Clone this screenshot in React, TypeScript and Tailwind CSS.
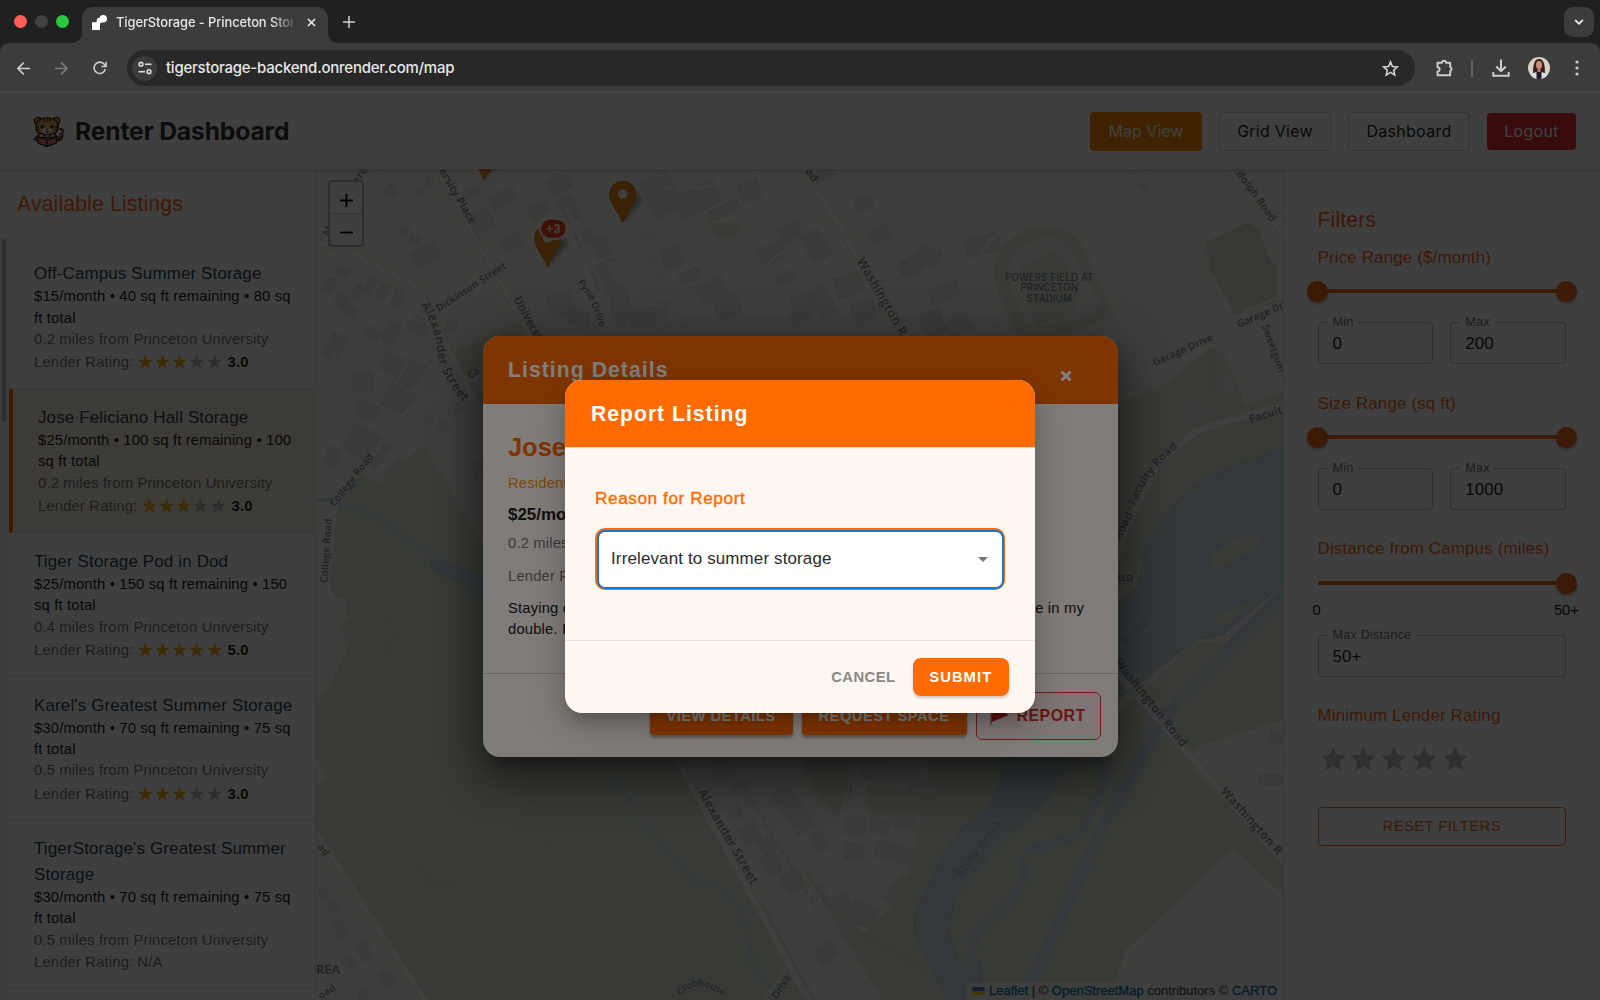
import React from "react";

const HELV = "font-['Liberation_Sans',Arial,sans-serif]";
const ROUND_STAR = "M12 17.27 18.18 21l-1.64-7.03L22 9.24l-7.19-.61L12 2 9.19 8.63 2 9.24l5.46 4.73L5.82 21z";
const SHARP_STAR = "M12 1l2.600 8.100H23l-6.800 5 2.600 8L12 17.200 5.200 22.100l2.600-8L1 9.100h8.400z";

type Listing = { title: string; detail: string; miles: string; rating: number | null; active?: boolean };

const listings: Listing[] = [
  { title: "Off-Campus Summer Storage", detail: "$15/month • 40 sq ft remaining • 80 sq ft total", miles: "0.2", rating: 3 },
  { title: "Jose Feliciano Hall Storage", detail: "$25/month • 100 sq ft remaining • 100 sq ft total", miles: "0.2", rating: 3, active: true },
  { title: "Tiger Storage Pod in Dod", detail: "$25/month • 150 sq ft remaining • 150 sq ft total", miles: "0.4", rating: 5 },
  { title: "Karel's Greatest Summer Storage", detail: "$30/month • 70 sq ft remaining • 75 sq ft total", miles: "0.5", rating: 3 },
  { title: "TigerStorage's Greatest Summer Storage", detail: "$30/month • 70 sq ft remaining • 75 sq ft total", miles: "0.5", rating: null },
];

function TabStrip() {
  return (
    <div className="flex h-[43px] shrink-0 items-start bg-[#1f2120]">
      <div className="flex h-[43px] w-[82px] items-center gap-2 pl-[13.5px]">
        <span className="size-[13px] rounded-full bg-[#ff5f57]" />
        <span className="size-[13px] rounded-full bg-[#404241]" />
        <span className="size-[13px] rounded-full bg-[#28c840]" />
      </div>
      <div className="relative mt-[7px] flex h-9 w-[246px] items-center rounded-t-[11px] bg-[#3c3c3c] px-[10px] pb-[5px]">
        <svg className="absolute bottom-0 -left-[10px] size-[10px]" viewBox="0 0 10 10"><path d="M10 0V10H0A10 10 0 0 0 10 0z" fill="#3c3c3c" /></svg>
        <svg className="absolute -right-[10px] bottom-0 size-[10px]" viewBox="0 0 10 10"><path d="M0 0V10H10A10 10 0 0 1 0 0z" fill="#3c3c3c" /></svg>
        <svg className="size-[15px] shrink-0" viewBox="0 0 15 15" fill="#fff">
          <circle cx="11.200" cy="3.800" r="3.800" /><path d="M0 7.200H4.700V5.500Q4.700 2.800 7.500 2.800H11V6.500Q11 7.600 9.500 7.600Q8 7.600 8 9.500V15H0z" />
        </svg>
        <div className="ml-[9px] w-[177px] overflow-hidden font-[Inter,sans-serif] text-[12.900px] font-medium tracking-[-0.080px] whitespace-nowrap text-[#e6e6e6] [mask-image:linear-gradient(90deg,#000_155px,transparent_182px)]">
          TigerStorage - Princeton Storage
        </div>
        <svg className="ml-[14px] size-[9px] shrink-0" viewBox="0 0 9 9"><path d="M1 1l7 7M8 1L1 8" stroke="#e3e3e3" strokeWidth="1.7" /></svg>
      </div>
      <svg className="mt-[15.500px] ml-[15px] size-[12px]" viewBox="0 0 12 12"><path d="M6 0v12M0 6h12" stroke="#d0d0d0" strokeWidth="1.5" /></svg>
      <div className="mt-[7px] mr-[6px] ml-auto flex size-[30px] items-center justify-center rounded-[9px] bg-[#3c3c3c]">
        <svg className="size-[10px]" viewBox="0 0 10 10"><path d="M1.200 3l3.800 3.800L8.800 3" fill="none" stroke="#e8e8e8" strokeWidth="1.8" /></svg>
      </div>
    </div>
  );
}

function Toolbar() {
  return (
    <div className="bg-[#1f2120]">
      <div className="flex h-[49px] items-center rounded-t-[9px] border-b border-[#4a4a4a] bg-[#3c3c3c] pt-[2px] pl-[17px]">
        <svg className="size-[13px]" viewBox="0 0 13 13"><path d="M13 6.500H1M6.800.7L1 6.500l5.800 5.800" fill="none" stroke="#cdcdcd" strokeWidth="1.700" /></svg>
        <svg className="ml-[25px] size-[13px]" viewBox="0 0 13 13"><path d="M0 6.500h12M6.200.7L12 6.500l-5.800 5.800" fill="none" stroke="#7c7c7c" strokeWidth="1.700" /></svg>
        <svg className="ml-[25px] size-[14px]" viewBox="0 0 14 14">
          <path d="M12.300 8.300A5.700 5.700 0 1 1 11.300 3.300L12.600 4.900" fill="none" stroke="#cdcdcd" strokeWidth="1.600" />
          <path d="M13.100.8V5.500H8.300" fill="none" stroke="#cdcdcd" strokeWidth="1.600" />
        </svg>
        <div className="ml-[20px] flex h-9 w-[1288px] items-center rounded-full bg-[#282828] pr-[16px] pl-[5px]">
          <div className="flex size-[25px] items-center justify-center rounded-full bg-[#3b3b3b]">
            <svg className="size-[14px]" viewBox="0 0 14 14" fill="none" stroke="#dcdcdc" strokeWidth="1.600">
              <circle cx="3" cy="3.300" r="1.900" /><path d="M7 3.300h6.500" /><circle cx="11" cy="10.700" r="1.900" /><path d="M.5 10.700H7" />
            </svg>
          </div>
          <span className="ml-[9px] font-[Inter,sans-serif] text-[15px] font-medium tracking-[-0.240px] text-[#e6e6e6]">tigerstorage-backend.onrender.com/map</span>
          <svg className="ml-auto size-[17px]" viewBox="0 0 16 16"><path d="M8 1.800l1.800 4.300 4.700.4-3.500 3.100 1 4.600-4-2.500-4 2.500 1-4.600-3.500-3.100 4.700-.4z" fill="none" stroke="#d2d2d2" strokeWidth="1.500" /></svg>
        </div>
        <svg className="ml-[20px] size-[19px]" viewBox="0 0 19 19">
          <path d="M2.500 3.700H7A2 2 0 0 1 11 3.700H15.200V8.200A2 2 0 0 1 15.200 12V16.200H2.500V12.500A2.100 2.100 0 0 0 2.500 8.200z" fill="none" stroke="#cdcdcd" strokeWidth="1.900" strokeLinejoin="round" />
        </svg>
        <span className="ml-[17px] h-[17px] w-[1.500px] bg-[#626262]" />
        <svg className="ml-[19px] size-[18px]" viewBox="0 0 18 18"><path d="M9 .5V12M4.200 7.500L9 12.200l4.800-4.700M1.300 13v3.700h15.400V13" fill="none" stroke="#cdcdcd" strokeWidth="2" /></svg>
        <svg className="ml-[18.500px] size-[22px] rounded-full" viewBox="0 0 22 22">
          <rect width="22" height="22" fill="#d9cfc6" />
          <path d="M5 18C5 8 6 2 11 2s6 6 6 16z" fill="#33201b" />
          <ellipse cx="11" cy="8" rx="3" ry="4" fill="#c98f78" />
          <path d="M2 22c0-6 4-7 9-7s9 1 9 7z" fill="#d7d9ea" />
          <path d="M8.500 15h5v7h-5z" fill="#1d1a20" />
          <path d="M9.500 11h3v4h-3z" fill="#b97c67" />
        </svg>
        <svg className="ml-[24.500px] h-[16px] w-[4px]" viewBox="0 0 4 16" fill="#cdcdcd"><circle cx="2" cy="2" r="1.600" /><circle cx="2" cy="8" r="1.600" /><circle cx="2" cy="14" r="1.600" /></svg>
      </div>
    </div>
  );
}

function TigerLogo() {
  return (
    <svg className="mt-px size-[31px]" viewBox="0 0 32 32">
      <g stroke="#2b2320" strokeWidth="1.300" strokeLinejoin="round">
        <path d="M24 24c4 1 6.500-2 5-6.500M30 16.500c.8-1.800-.6-2.600-1.600-1.600" fill="none" stroke="#2b2320" strokeWidth="4" />
        <path d="M24 24c4 1 6.500-2 5-6.500M30 16.500c.8-1.800-.6-2.600-1.600-1.600" fill="none" stroke="#d88428" strokeWidth="2.200" strokeDasharray="2.500 1.200" />
        <circle cx="5" cy="5" r="3.600" fill="#efa04b" /><circle cx="24" cy="5" r="3.600" fill="#efa04b" />
        <path d="M5 20l-4 4 5 2.500zM24 20l4 4-5 2.500z" fill="#d39a6a" />
        <path d="M14.500 2C22 2 26 6 26 11.500S21 19.500 14.500 19.500 3 17 3 11.500 7 2 14.500 2z" fill="#f2a757" />
        <path d="M5 22h19v6l-9.500 3.500L5 28z" fill="#d28b62" />
        <path d="M5 22l9.500 2.500L24 22M14.500 24.500v7" fill="none" />
        <path d="M5.500 20c2-3 6-2 6 .5s-5 2.500-6-.5zM23.500 20c-2-3-6-2-6 .5s5 2.500 6-.5z" fill="#f3d3a8" />
      </g>
      <ellipse cx="14.500" cy="15" rx="5" ry="3.300" fill="#fbe9d2" />
      <path d="M14.500 2v4M11 2.500l.8 3M18 2.500l-.8 3M3.500 11l3 .6M3.800 14l3-.2M25.500 11l-3 .6M25.300 14l-3-.2M13 16l1.500 1 1.500-1" stroke="#2b2320" strokeWidth="1.300" fill="none" />
      <circle cx="9.500" cy="11" r="2" fill="#1d4050" /><circle cx="19.500" cy="11" r="2" fill="#1d4050" /><path d="M13 12.800h3l-1.500 1.800z" fill="#2b2320" />
    </svg>
  );
}

function PageHeader() {
  return (
    <header className="relative z-10 flex h-[77px] shrink-0 items-center bg-white pt-px pr-[24px] pl-[33px] font-[Inter,sans-serif] shadow-[0_2px_5px_rgba(0,0,0,0.16)]">
      <TigerLogo />
      <h1 className="mt-px ml-[11px] text-[24.600px] font-bold tracking-[-0.120px] text-[#333]">Renter Dashboard</h1>
      <nav className="ml-auto flex items-center gap-[17px] text-[16px] text-[#222]">
        <span className="flex h-[39px] w-[112px] items-center justify-center rounded-[4px] bg-[#ff8f00] text-white">Map View</span>
        <span className="flex h-[39px] w-[112px] items-center justify-center rounded-[4px] border border-[#ccc] tracking-[0.250px]">Grid View</span>
        <span className="flex h-[39px] w-[122px] items-center justify-center rounded-[4px] border border-[#ccc] tracking-[0.300px]">Dashboard</span>
        <span className="flex h-[37px] w-[89px] items-center justify-center rounded-[4px] bg-[#e03131] tracking-[0.300px] text-white">Logout</span>
      </nav>
    </header>
  );
}

function Sidebar() {
  return (
    <aside className="flex w-[316px] shrink-0 flex-col overflow-hidden border-r border-[#e4e4e4] bg-white">
      <h2 className="pt-[20.500px] pl-[17px] text-[21.160px] leading-[28px] tracking-[0.16px] text-[#f26a1b]">Available Listings</h2>
      <div className="mt-[21.500px] flex min-h-0 flex-1">
        <div className="w-[9px] shrink-0 bg-[#f4f4f4] pl-[2px]"><div className="h-[183px] w-[4px] rounded-full bg-[#bdbdbd]" /></div>
        <ul className="flex min-w-0 flex-1 flex-col pt-[6px]">
          {listings.map((l) => (
            <li
              key={l.title}
              className={
                l.active
                  ? "shrink-0 border-b border-l-4 border-b-[#d8d8d8] border-l-[#ff6b00] bg-[#faf1e2] pt-[16px] pr-[15px] pb-[13.900px] pl-[25px]"
                  : "shrink-0 border-b border-b-[#dcdcdc] pt-[16px] pr-[20px] pb-[13.900px] pl-[25px]"
              }
            >
              <p className="text-[16.930px] leading-[25.400px] tracking-[0.16px] text-[#2c3e50]">{l.title}</p>
              <p className="text-[14.810px] leading-[21.180px] tracking-[0.16px] text-[#202020]">{l.detail}</p>
              <p className="text-[14.810px] leading-[21.180px] tracking-[0.16px] text-[#757575]">{l.miles} miles from Princeton University</p>
              <div className={l.rating === null ? "flex h-[22px] items-center text-[14.810px] tracking-[0.16px] text-[#757575]" : "flex h-[24px] items-center pt-px text-[14.810px] tracking-[0.16px] text-[#757575]"}>
                Lender Rating:
                {l.rating === null ? (
                  <span className="ml-[4px]">N/A</span>
                ) : (
                  <>
                    <span className="ml-[4px] flex">
                      {[1, 2, 3, 4, 5].map((n) => (
                        <svg key={n} className="mb-[2px] size-[17.050px]" viewBox="0 0 24 23">
                          <path d={SHARP_STAR} className={n <= (l.rating ?? 0) ? "fill-[#eeb01e]" : "fill-[#b5b5b5]"} />
                        </svg>
                      ))}
                    </span>
                    <b className="ml-[5px] text-[#202020]">{l.rating}.0</b>
                  </>
                )}
              </div>
            </li>
          ))}
        </ul>
      </div>
    </aside>
  );
}

function Slider({ range }: { range?: boolean }) {
  return (
    <div className="flex h-[22px] items-center">
      <div className="flex h-1 w-[249px] items-center justify-between bg-[#f26a1b]">
        {range ? <span className="-ml-[10.500px] size-[21px] rounded-full bg-[#f26a1b] shadow-[0_2px_3px_rgba(0,0,0,0.3)]" /> : <span />}
        <span className="-mr-[10.500px] size-[21px] rounded-full bg-[#f26a1b] shadow-[0_2px_3px_rgba(0,0,0,0.3)]" />
      </div>
    </div>
  );
}

function Field({ label, value }: { label: string; value: string }) {
  return (
    <fieldset className="h-[49px] flex-1 rounded-[4px] border border-[#bdbdbd] px-[9px] pb-0">
      <legend className="ml-0 px-[5px] text-[12.700px] leading-[15px] tracking-[0.16px] text-[#757575]">{label}</legend>
      <div className="px-[5px] pt-[4px] text-[16.930px] leading-[20px] tracking-[0.1px] text-[#202020]">{value}</div>
    </fieldset>
  );
}

function FilterPanel() {
  const label = "text-[16.930px] leading-[24px] tracking-[0.16px] text-[#f26a1b]";
  return (
    <aside className="flex w-[317px] shrink-0 flex-col border-l border-[#ddd] bg-white pt-[37px] pr-[34px] pl-[33.500px]">
      <h2 className="text-[21.160px] leading-[28px] tracking-[0.16px] text-[#f26a1b]">Filters</h2>
      <div className="mt-[12px] h-[145.500px]">
        <div className={label}>Price Range ($/month)</div>
        <div className="mt-[10px]"><Slider range /></div>
        <div className="mt-[13px] flex gap-[17px]"><Field label="Min" value="0" /><Field label="Max" value="200" /></div>
      </div>
      <div className="h-[145.500px]">
        <div className={label}>Size Range (sq ft)</div>
        <div className="mt-[10.500px]"><Slider range /></div>
        <div className="mt-[12.500px] flex gap-[17px]"><Field label="Min" value="0" /><Field label="Max" value="1000" /></div>
      </div>
      <div className="h-[167px]">
        <div className={label}>Distance from Campus (miles)</div>
        <div className="mt-[11px]"><Slider /></div>
        <div className="mt-[6px] -mr-[13px] -ml-[5px] flex justify-between text-[14.810px] leading-[20px] text-[#202020]"><span>0</span><span>50+</span></div>
        <div className="mt-[8px] flex"><Field label="Max Distance" value="50+" /></div>
      </div>
      <div className={label}>Minimum Lender Rating</div>
      <div className="mt-[16px] flex">
        {[1, 2, 3, 4, 5].map((n) => (
          <svg key={n} className="size-[30.500px]" viewBox="0 0 24 24"><path d={ROUND_STAR} fill="#bdbdbd" /></svg>
        ))}
      </div>
      <div className="mt-[32px] flex h-[39px] items-center justify-center rounded-[4px] border border-[#f26a1b] text-[14.810px] tracking-[0.420px] text-[#f26a1b]">RESET FILTERS</div>
    </aside>
  );
}

// [x, y, width, height, rotation] in map units (three units per pixel).
const buildings: number[][] = [
  [290, 235, 80, 50, -30], [60, 380, 34, 40, 30], [115, 350, 20, 45, 25], [150, 330, 25, 50, 25], [190, 340, 25, 50, 25], [230, 365, 25, 55, 25],
  [60, 300, 40, 25, 30], [25, 330, 30, 40, 20], [280, 450, 60, 50, 30], [205, 460, 40, 70, 25], [145, 480, 45, 32, 30], [75, 410, 45, 30, 30], [35, 500, 45, 75, 25],
  [200, 560, 60, 60, 30], [110, 610, 60, 60, 5], [265, 580, 45, 80, 30], [205, 660, 85, 70, 25], [120, 705, 70, 45, 25], [90, 790, 125, 85, 35], [30, 840, 40, 50, 20], [205, 885, 65, 40, -45],
  [325, 745, 28, 24, -20], [365, 760, 30, 30, 45], [410, 695, 26, 40, -20], [470, 880, 40, 50, -20], [390, 455, 30, 40, 20],
  [210, 50, 32, 32, 30], [330, 30, 22, 22, 20], [300, 60, 22, 22, 20], [250, 170, 26, 30, 20], [280, 200, 30, 30, 20],
  [440, 60, 50, 26, -30], [520, 70, 80, 40, -30], [470, 130, 60, 60, -25], [560, 200, 55, 40, -25], [700, 20, 60, 50, -30], [740, 90, 45, 70, -30], [640, 110, 55, 35, -30],
  [780, 190, 50, 45, -25], [840, 210, 42, 75, -20], [880, 350, 60, 110, -20], [830, 290, 50, 65, -20], [940, 420, 120, 40, -20], [700, 380, 70, 60, -20], [760, 430, 60, 40, 10],
  [990, 20, 90, 120, -25], [1080, 60, 130, 70, -25], [1180, 110, 90, 30, -25], [1270, 40, 60, 55, -20], [1330, 230, 75, 55, -25], [1390, 170, 60, 45, -25],
  [1040, 240, 55, 60, -20], [1150, 340, 80, 55, -25], [1200, 390, 70, 55, -25], [1090, 310, 60, 30, -25], [1380, 315, 55, 30, -25], [1430, 380, 50, 60, -20], [1420, 425, 70, 30, -30],
  [1490, 360, 60, 90, -30], [1560, 320, 80, 60, -20], [1610, 400, 70, 60, -20], [1470, 190, 60, 90, -30], [1500, 5, 60, 30, -20], [1618, 85, 50, 40, -20], [1660, 180, 60, 40, -30],
  [1750, 270, 70, 50, -30], [1800, 240, 70, 50, 20], [1840, 350, 90, 45, -20], [1820, 430, 60, 70, -20], [1890, 450, 70, 50, -30], [1950, 205, 100, 52, -15], [2590, 690, 110, 70, -15], [2470, 48, 20, 14, 0],
  [60, 2260, 26, 50, -30], [130, 2320, 30, 60, -30], [190, 2420, 45, 28, 30], [90, 2370, 25, 25, 20], [10, 2160, 26, 30, 10], [130, 2460, 24, 32, 20], [40, 2200, 24, 34, -30],
  [1190, 1800, 55, 40, 30], [1250, 1830, 50, 40, 30], [1240, 1910, 32, 40, -25], [1270, 1970, 60, 55, -30], [1340, 2060, 50, 60, -30], [1400, 2110, 60, 60, -30], [1330, 2010, 45, 45, -30],
  [1400, 1850, 60, 150, -35], [1640, 1800, 150, 40, 5], [1780, 1840, 80, 40, 20], [1585, 1950, 65, 50, 5], [1660, 1950, 60, 45, 10], [1730, 1945, 70, 40, 5], [1585, 2025, 55, 45, 0], [1680, 2030, 110, 50, 15],
  [1550, 2180, 60, 110, -25], [1600, 2210, 80, 60, 25], [1490, 1990, 40, 60, -25], [1700, 2150, 90, 40, -50], [1500, 2330, 60, 50, -30], [2830, 1820, 70, 30, 0], [2860, 1690, 40, 36, 20],
];

type RoadLabel = { t: string; x: number; y: number; r: number; s: number; ls?: number };
const labels: RoadLabel[] = [
  { t: "ersity Place", x: 368, y: 8, r: 60, s: 33 },
  { t: "Dickinson Street", x: 368, y: 432, r: -33, s: 30 },
  { t: "Universi", x: 593, y: 392, r: 62, s: 34 },
  { t: "Pyne", x: 785, y: 342, r: 56, s: 29 },
  { t: "Drive", x: 826, y: 406, r: 70, s: 29 },
  { t: "College Road", x: 55, y: 1018, r: -52, s: 30 },
  { t: "College Road", x: 34, y: 1245, r: -86, s: 30 },
  { t: "Co", x: 462, y: 634, r: -32, s: 30 },
  { t: "tre", x: 132, y: 46, r: -62, s: 33 },
  { t: "M", x: 40, y: 205, r: -70, s: 31 },
  { t: "ad", x: 1466, y: 12, r: 52, s: 34 },
  { t: "Washington R", x: 1622, y: 278, r: 60, s: 37, ls: 1.5 },
  { t: "dolph Road", x: 2760, y: 18, r: 54, s: 32 },
  { t: "Garage Drive", x: 2516, y: 594, r: -24, s: 30 },
  { t: "Garage Dri", x: 2768, y: 480, r: -24, s: 30 },
  { t: "Sweetgum", x: 2838, y: 474, r: 70, s: 29 },
  { t: "Facult", x: 2804, y: 766, r: -18, s: 34 },
  { t: "Road", x: 2412, y: 1115, r: -62, s: 34 },
  { t: "Alexander Street", x: 1145, y: 1872, r: 60, s: 37, ls: 1.5 },
  { t: "Washington Road", x: 2394, y: 1484, r: 51.5, s: 36, ls: 1.5 },
  { t: "Washington R", x: 2712, y: 1872, r: 48, s: 36, ls: 1.5 },
  { t: "Drive", x: 1384, y: 2494, r: -58, s: 30 },
  { t: "oad", x: 14, y: 2494, r: -32, s: 30 },
  { t: "ad", x: 4, y: 2036, r: 55, s: 30 },
];

function Pin({ x, y, hole = true }: { x: number; y: number; hole?: boolean }) {
  return (
    <g transform={`translate(${x} ${y})`}>
      <path d="M0 0L60 -66A30 26 0 0 0 10 -80z" fill="#000" opacity="0.3" filter="url(#soft)" />
      <path d="M0 0C-12 -32 -39 -56 -39 -86A39 38 0 0 1 39 -86C39 -56 12 -32 0 0z" fill="#ee8a14" stroke="#c9761a" strokeWidth="3" />
      {hole && <circle cx="0" cy="-86" r="14" fill="#fff" />}
    </g>
  );
}

function CampusMap() {
  return (
    <svg className="block h-full w-full" viewBox="0 3 2901 2493" preserveAspectRatio="xMinYMin slice">
      <defs>
        <filter id="soft" x="-50%" y="-50%" width="200%" height="200%"><feGaussianBlur stdDeviation="6" /></filter>
        <path id="alex" d="M314 412Q358 470 364 560Q372 625 472 740" />
        <path id="faculty" d="M2456 1014Q2500 900 2600 828" />
        <path id="club" d="M1095 2484Q1140 2420 1235 2494" />
        <path id="stony" d="M1935 2126L2085 1932" />
      </defs>
      <rect width="2901" height="2500" fill="#fbf8f3" />
      <g fill="#e1ead6">
        <path d="M325 830L500 1130 1075 1766 1300 2186 1340 2206 1430 2370 1500 2496H330L0 1996V1594L32 1571 97 1436 70 1371 98 1356 85 1291 50 1286 30 1176 50 1130 60 1010 135 918 190 945z" />
        <path d="M0 1766L35 1831 0 1856z" fill="#fbf8f3" />
        <path d="M400 560L600 460 670 500 500 600 470 640z" />
        <path d="M2035 300C2040 190 2240 120 2302 240L2396 445 2240 500 2110 520C2090 440 2030 380 2035 300z" />
        <path d="M2075 300C2085 220 2220 170 2270 250L2355 410 2320 450 2130 480C2120 420 2075 380 2075 300z" fill="#f6f3ec" />
        <path d="M2110 300L2210 250 2240 265 2290 380 2270 430 2160 475z" />
        <path d="M2668 225L2792 165 2830 185 2860 270 2885 300V400L2757 441 2720 370 2685 310z" fill="#d9e6cf" />
        <path d="M2535 655L2690 535 2725 560 2790 710 2901 668V840L2672 930 2540 1055 2480 1180 2472 1260 2400 1300V705z" />
        <path d="M1185 165h88c0 30-20 45-44 45s-44-15-44-45z" />
        <path d="M2405 1640L2640 1420 2750 1425 2901 1300V1655L2640 1740 2630 1806 2780 1960 2901 2076V2180L2752 2040 2430 2346 2380 2496H1880L1800 2000 1860 1766H2400z" />
        <path d="M1452 1766H1600L1610 1880 1560 1940 1500 1880z" />
        <path d="M1650 1850L1850 1880 1810 1940H1660z" />
        <path d="M1840 1766H2090L2010 1940 1890 2050 1790 2240 1900 2496H1700L1460 2100 1640 2300 1760 2180 1810 2000z" />
      </g>
      <path d="M2725 680L2720 560 2780 710z" fill="#fbf8f3" opacity="0.5" />
      <path d="M2405 1260L2472 1260 2460 1200 2480 1200 2472 1210 2400 1330z" fill="#eef0da" />
      <g fill="#cce0e8" stroke="#b6d3de" strokeWidth="3">
        <path d="M2901 838L2672 930 2600 985 2535 1055 2490 1140 2465 1260 2400 1310V1600L2640 1416 2720 1400 2901 1250z" />
        <path d="M2060 1770L2062 1816 2017 1921 1952 1966 1882 2056 1795 2236 1797 2306 1900 2500H2000L1992 2376 1932 2386 1897 2286 1922 2176 2052 2026 2182 1906 2247 1816 2240 1770z" />
        <path d="M345 1180L370 1176 500 1230V1290L350 1200z" />
      </g>
      <path d="M0 995H50L80 1012 130 1020 200 1060 300 1130 350 1170 400 1200" fill="none" stroke="#cce0e8" strokeWidth="9" />
      <path d="M2700 1345L2820 1290 2730 1370 2705 1375z" fill="#e6ecd8" />
      <path d="M2680 1180C2700 1130 2780 1090 2825 1100C2850 1150 2780 1150 2700 1215z" fill="#e6ecd8" />
      <path d="M2345 1766C2400 1850 2320 1920 2295 2000C2200 2040 2150 2020 2125 2080C2130 2180 2060 2220 2000 2280C1960 2320 1960 2380 1970 2496" fill="none" stroke="#cce0e8" strokeWidth="26" />
      <path d="M2910 1270L2560 1626 2360 1976 2120 2500" fill="none" stroke="#cce0e8" strokeWidth="36" />
      <path d="M2880 1265L2535 1600 2326 1976" fill="none" stroke="#efe9dc" strokeWidth="4" strokeDasharray="5 6" />
      <path d="M865 1766L910 1860 950 1900 970 1950 1030 2010 1050 2050 1085 2080 1130 2140 1200 2150 1270 2220 1300 2310 1310 2400 1380 2470" fill="none" stroke="#cce0e8" strokeWidth="8" />
      <g fill="#f0ebe3" stroke="#e2dcd2" strokeWidth="2">
        {buildings.map(([x, y, w, h, r], i) => (
          <rect key={i} x={x} y={y} width={w} height={h} transform={`rotate(${r} ${x + w / 2} ${y + h / 2})`} />
        ))}
      </g>
      <g fill="none" stroke="#d5cec5" strokeWidth="3" strokeDasharray="3 7">
        <path d="M0 580L90 500 240 480 330 600 270 680 210 640 0 700M80 560L100 620 75 690 60 740M240 480L200 560 290 620M330 600L380 540" />
        <path d="M520 10L600 150 680 210 760 300 830 500M560 130L760 90 880 60M640 240L700 500M600 260L760 210M680 130L760 330M760 100L940 420 1040 500M900 240L1180 150 1300 60M960 180L1180 330 1300 240 1450 120M1180 150C1190 240 1280 240 1290 150" />
        <path d="M640 330L760 310M640 400L720 380M680 500L790 480M1000 200L1030 330 1130 360M940 130L1100 480" />
        <path d="M1660 10L1702 130M1452 330L1700 340 1860 200 2000 170 2260 150 2310 60 2490 3M1700 340L1800 320 1900 300 2000 380M1860 200L1880 290 2010 240 1990 160M1900 300L2010 400 2080 500M2310 120L2400 380 2480 560" />
        <path d="M2660 230L2700 370 2740 470M2650 230L2901 130M2680 540L2700 640 2660 760M2530 620L2600 560M200 1330L240 1400 190 1500" />
        <path d="M310 2090L340 2150 430 2150M640 1860L670 1920 690 2040M1130 1900L1000 1960M1570 2050L1500 2200 1600 2060 1800 2000 1850 1850M1452 2130L1560 2100" />
      </g>
      <g fill="none" stroke="#fffdfa" strokeLinejoin="round" strokeWidth="6">
        <path d="M0 280L80 240 120 150 200 20M120 280L220 350M100 230L430 110 560 50M0 660L60 560 100 540M280 440L380 490M560 310L360 440 300 420M450 240L600 460M750 120L880 400 860 500" />
        <path d="M1050 60C1120 70 1140 60 1220 50M1290 40L1330 10M800 300L900 260 960 380 1060 430 1080 500M1340 300L1400 250 1450 300" />
        <path d="M1452 300L1600 260 1560 200M1530 80C1620 60 1640 160 1560 170M1990 320C1980 200 2100 130 2310 150M2000 380L2080 500M2290 90L2380 320 2410 420 2500 590 2560 610M2780 430L2901 385M2520 610L2700 530" strokeWidth="8" />
        <path d="M0 2230L90 2160M1180 1880L1370 1770M1600 1770C1620 1900 1520 1990 1580 2120C1620 2200 1730 2180 1720 2110M1430 2380L1340 2500M2640 1740L2901 1660M2430 2346V2500M2732 2080V2500M2560 2226H2901M2500 2290H2901M2460 2370H2901M2430 2440H2901" strokeWidth="5" />
      </g>
      <g fill="none" strokeLinecap="round" strokeLinejoin="round">
        <g stroke="#efe4cf">
          <path d="M0 225L70 235 290 350 330 405 420 590 500 740 1075 1760 1480 2500" strokeWidth="25" />
          <path d="M360 0L640 500 760 700" strokeWidth="21" />
          <path d="M1452 -20L1610 240 1790 540 2300 1400 2630 1770 2901 2080" strokeWidth="27" />
          <path d="M2901 715L2780 745 2640 790 2530 880 2430 1080 2400 1180" strokeWidth="25" />
          <path d="M0 1996L330 2500" strokeWidth="23" />
          <path d="M2740 3L2901 200" strokeWidth="19" />
        </g>
        <g stroke="#fffefc">
          <path d="M0 225L70 235 290 350 330 405 420 590 500 740 1075 1760 1480 2500" strokeWidth="18" />
          <path d="M360 0L640 500 760 700" strokeWidth="14" />
          <path d="M1452 -20L1610 240 1790 540 2300 1400 2630 1770 2901 2080" strokeWidth="20" />
          <path d="M2901 715L2780 745 2640 790 2530 880 2430 1080 2400 1180" strokeWidth="18" />
          <path d="M0 1996L330 2500" strokeWidth="16" />
          <path d="M2740 3L2901 200" strokeWidth="13" />
          <path d="M500 620L280 720 60 1000 35 1250 60 1320M0 2490L210 2370" strokeWidth="12" />
        </g>
      </g>
      <path d="M1280 1850L1500 2220M1452 2130L1640 2300 1900 2450" stroke="#dcd8d3" strokeWidth="5" strokeDasharray="16 12" fill="none" />
      <g className="font-['Open_Sans','Noto_Sans',sans-serif] font-semibold" fill="#8489a0">
        {labels.map((l, i) => (
          <text key={i} fontSize={l.s} letterSpacing={l.ls ?? 0.5} transform={`translate(${l.x} ${l.y}) rotate(${l.r})`}>{l.t}</text>
        ))}
        <text fontSize="37" letterSpacing="1.500"><textPath href="#alex">Alexander Street</textPath></text>
        <text fontSize="34" letterSpacing="1"><textPath href="#faculty">Faculty Road</textPath></text>
        <text fontSize="28"><textPath href="#club">Clubhouse</textPath></text>
        <text fontSize="39" x="0" y="2418">REA</text>
        <g fontSize="29" textAnchor="middle" className="font-[Inter,sans-serif] font-medium" letterSpacing="0.600">
          <text x="2200" y="339">POWERS FIELD AT</text><text x="2200" y="370">PRINCETON</text><text x="2200" y="402">STADIUM</text>
        </g>
        <text fontSize="27" x="2402" y="1239">ELD</text>
        <g fill="#9db4c0" className="font-normal">
          <text fontSize="32" letterSpacing="2"><textPath href="#stony">Stony Brook</textPath></text>
          <text fontSize="30" letterSpacing="2" transform="translate(2428 1428) rotate(-40)">Brook</text>
        </g>
      </g>
      <Pin x={505} y={36} />
      <Pin x={920} y={164} />
      <Pin x={695} y={296} />
      <rect x="669" y="149" width="86" height="66" rx="33" fill="#fff" />
      <rect x="675" y="155" width="74" height="54" rx="27" fill="#f4470f" />
      <text x="712" y="195" textAnchor="middle" fontSize="38" fill="#fff" className="font-['Liberation_Sans',sans-serif] font-bold">+3</text>
    </svg>
  );
}

function MapArea() {
  return (
    <div className="relative min-w-0 flex-1 overflow-hidden">
      <CampusMap />
      <div className="absolute top-[11px] left-[12px] flex w-[36px] flex-col rounded-[4px] border-2 border-[#bbb8b2] bg-white">
        <span className="flex h-[32px] items-center justify-center border-b border-[#ccc] pt-[5px]"><svg className="size-[13px]" viewBox="0 0 13 13"><path d="M6.500 0v13M0 6.500h13" stroke="#000" strokeWidth="1.800" /></svg></span>
        <span className="flex h-[31px] items-center justify-center pt-[5px]"><svg className="size-[13px]" viewBox="0 0 13 13"><path d="M0 6.500h13" stroke="#000" strokeWidth="1.800" /></svg></span>
      </div>
      <div className="absolute right-0 bottom-0 flex h-[18px] items-center bg-white/80 pr-[6px] pl-[5px] text-[13px] whitespace-pre text-[#333]">
        <svg className="mr-[4px] h-[8px] w-[13px]" viewBox="0 0 12 8"><path fill="#4C7BE1" d="M0 0h12v4H0z" /><path fill="#FFD500" d="M0 4h12v4H0z" /></svg>
        <span className="text-[#0078a8] [-webkit-text-stroke:0.300px_#0078a8]">Leaflet</span> | © <span className="text-[#0078a8] [-webkit-text-stroke:0.300px_#0078a8]">OpenStreetMap</span> contributors © <span className="text-[#0078a8] [-webkit-text-stroke:0.300px_#0078a8]">CARTO</span>
      </div>
    </div>
  );
}

function ListingDialog() {
  return (
    <div className="flex h-[421px] w-[635px] flex-col overflow-hidden rounded-[17px] bg-[#fff8f2] shadow-[0_12px_16px_-7px_rgba(0,0,0,0.3),0_25px_40px_3px_rgba(0,0,0,0.25),0_10px_49px_8px_rgba(0,0,0,0.3)]">
      <div className="flex h-[68px] shrink-0 items-center justify-between bg-[#ff6b00] pt-px pr-[46px] pl-[25.500px] text-white">
        <h2 className="text-[21.160px] font-bold tracking-[1.060px]">Listing Details</h2>
        <svg className="mt-[12px] size-[12px]" viewBox="0 0 12 12"><path d="M1.500 1.500l9 9M10.500 1.500l-9 9" stroke="#fff" strokeWidth="3" /></svg>
      </div>
      <div className="flex-1 border-b border-[#d5cec8] pl-[25.500px] whitespace-nowrap">
        <p className="pt-[26px] text-[25.400px] leading-[34px] font-bold text-[#ff6b00]">Jose Feliciano Hall Storage</p>
        <p className="mt-[8px] text-[14.810px] leading-[22px] tracking-[0.160px] text-[#f9930f]">Residential Hall</p>
        <p className="mt-[9px] text-[16.930px] leading-[24px] font-bold text-[#202020]">$25/month • 100 sq ft</p>
        <p className="mt-[6px] text-[14.810px] leading-[21px] tracking-[0.160px] text-[#757575]">0.2 miles from Princeton University</p>
        <p className="mt-[12px] text-[14.810px] leading-[21px] tracking-[0.160px] text-[#757575]">Lender Rating: 3.0</p>
        <div className="mt-[11px] flex w-[576px] justify-between text-[14.810px] leading-[21.200px] tracking-[0.160px] text-[#202020]"><span>Staying on campus this summer</span><span>space in my</span></div>
        <p className="text-[14.810px] leading-[21.200px] tracking-[0.160px] text-[#202020]">double. It is dry.</p>
      </div>
      <div className="flex h-[83px] shrink-0 items-center justify-end gap-[9px] pt-px pr-[17px] text-[14.810px] font-bold text-white">
        <span className="flex h-[39px] w-[143px] items-center justify-center rounded-[4px] bg-[#ff6b00] pt-px tracking-[0.420px] shadow-[0_3px_3px_rgba(0,0,0,0.3)]">VIEW DETAILS</span>
        <span className="flex h-[39px] w-[165px] items-center justify-center rounded-[4px] bg-[#ff6b00] pt-px tracking-[0.420px] shadow-[0_3px_3px_rgba(0,0,0,0.3)]">REQUEST SPACE</span>
        <span className="flex h-[48px] w-[125px] items-center rounded-[6px] border-[1.500px] border-[#e53935] bg-[#fdeceb] pl-[13px] text-[15.900px] tracking-[0.500px] text-[#d32f2f]">
          <svg className="mr-[8px] h-[21px] w-[19px]" viewBox="0 0 19 21"><path d="M1 1v19" stroke="#777" strokeWidth="1.200" /><path d="M1.500 1L19 10 1.500 17z" fill="#b71c1c" /></svg>
          REPORT
        </span>
      </div>
    </div>
  );
}

function ReportDialog() {
  return (
    <div className="mt-px flex h-[333px] w-[470px] flex-col overflow-hidden rounded-[17px] bg-[#fff7f1] shadow-[0_12px_16px_-7px_rgba(0,0,0,0.2),0_10px_34px_2px_rgba(0,0,0,0.22)]">
      <div className="flex h-[68px] shrink-0 items-center border-b border-[#f3d9c6] bg-[#ff6b00] pt-px pl-[26px] text-[21.160px] font-bold tracking-[1px] text-white">Report Listing</div>
      <div className="flex-1 px-[30px] pt-[38px]">
        <p className="text-[17.200px] leading-[24px] font-medium tracking-[0.580px] text-[#ff6b00] [-webkit-text-stroke:0.400px_#ff6b00]">Reason for Report</p>
        <div className="mt-[18px] flex h-[62px] rounded-[10px] bg-[#ff6b00] p-[1.500px]">
          <div className="flex flex-1 items-center justify-between rounded-[8px] border-2 border-[#1976d2] bg-white pr-[14px] pl-[12.500px] text-[16.930px] tracking-[0.150px] text-[#2b2b2b]">
            Irrelevant to summer storage
            <svg className="h-[5px] w-[10px]" viewBox="0 0 10 5"><path d="M0 0h10L5 5z" fill="#757575" /></svg>
          </div>
        </div>
      </div>
      <div className="flex h-[73.500px] shrink-0 items-center justify-end border-t border-[#ecdfd8] pt-px pr-[26px] text-[14.810px] font-bold">
        <span className="mr-[17px] tracking-[0.450px] text-[#888]">CANCEL</span>
        <span className="flex h-[38px] w-[96.500px] items-center justify-center rounded-[8px] bg-[#ff6b00] tracking-[1.060px] text-white shadow-[0_2px_3px_rgba(0,0,0,0.2)]">SUBMIT</span>
      </div>
    </div>
  );
}

export default function App() {
  return (
    <div className="flex h-[1000px] w-[1600px] flex-col overflow-hidden bg-white">
      <TabStrip />
      <Toolbar />
      <div className={`relative flex min-h-0 flex-1 flex-col ${HELV}`}>
        <PageHeader />
        <main className="flex min-h-0 flex-1">
          <Sidebar />
          <MapArea />
          <FilterPanel />
        </main>
        <div className="absolute inset-0 z-20 flex items-center justify-center bg-black/50"><ListingDialog /></div>
        <div className="absolute inset-0 z-30 flex items-center justify-center bg-black/50"><ReportDialog /></div>
      </div>
    </div>
  );
}
